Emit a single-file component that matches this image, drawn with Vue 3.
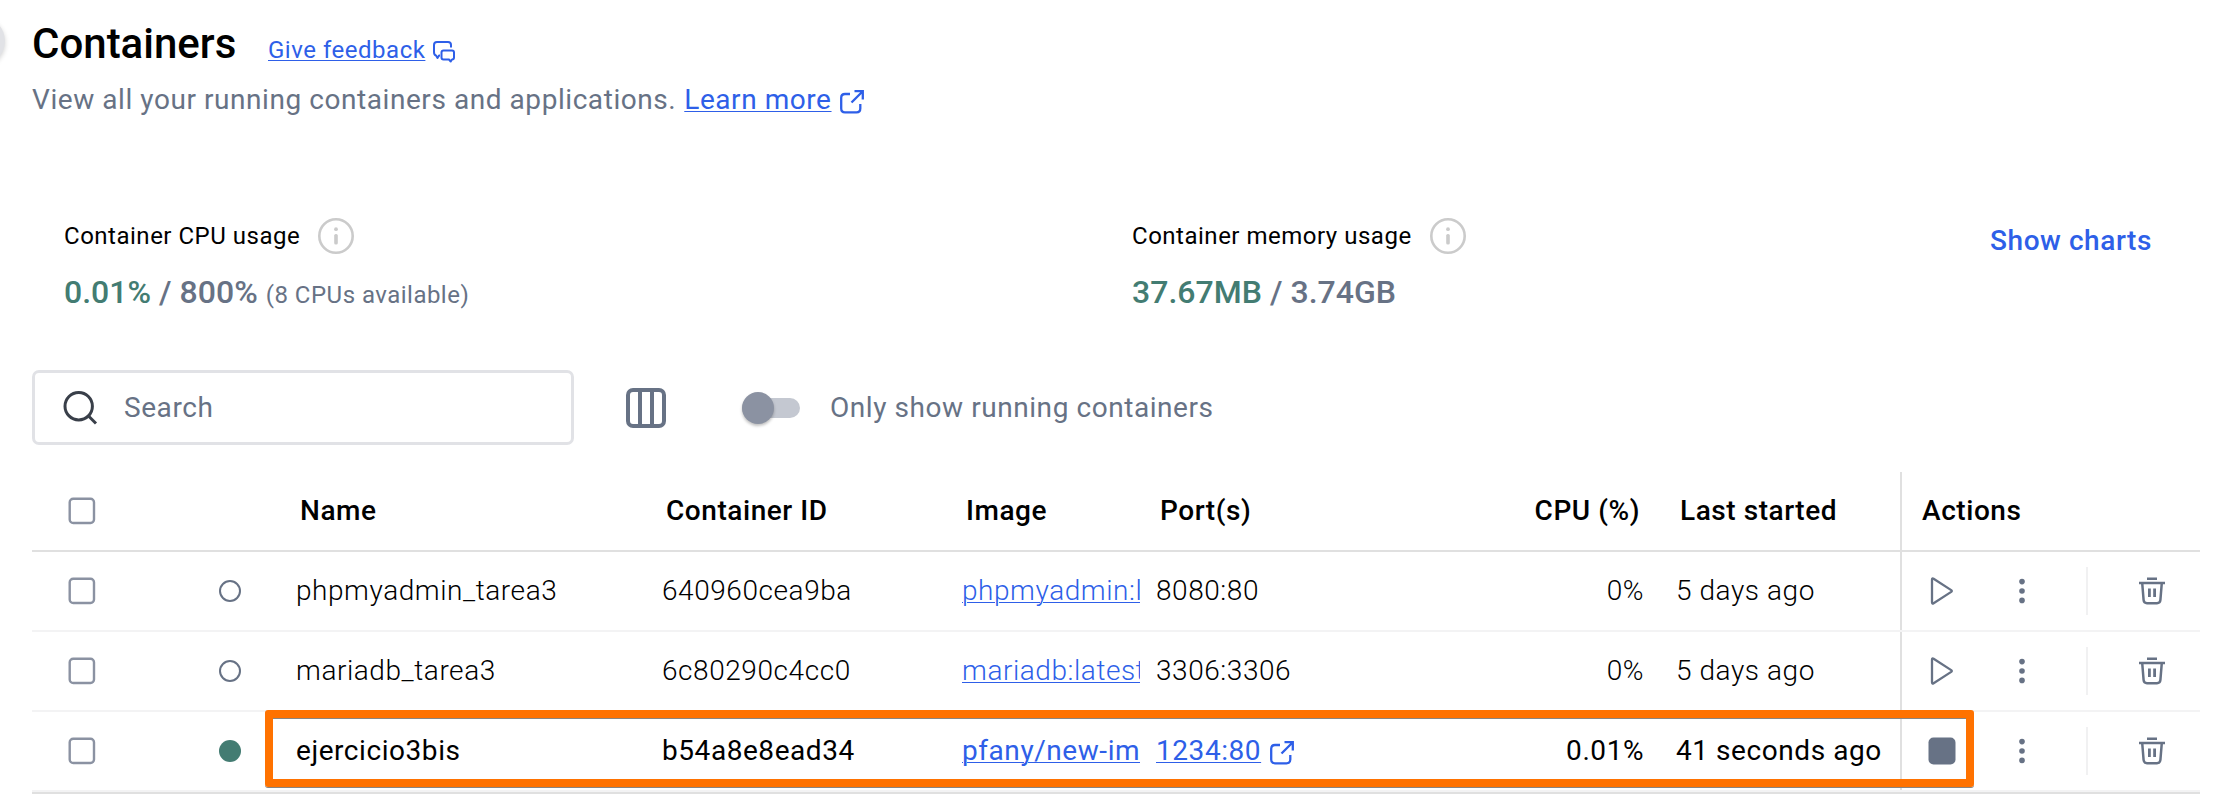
<script setup>
const rows = [
  { name: 'phpmyadmin_tarea3', id: '640960cea9ba', image: 'phpmyadmin:latest', port: '8080:80', cpu: '0%', started: '5 days ago', running: false },
  { name: 'mariadb_tarea3', id: '6c80290c4cc0', image: 'mariadb:latest', port: '3306:3306', cpu: '0%', started: '5 days ago', running: false },
  { name: 'ejercicio3bis', id: 'b54a8e8ead34', image: 'pfany/new-image', port: '1234:80', cpu: '0.01%', started: '41 seconds ago', running: true },
]
</script>

<template>
  <main class="page">
    <div class="drawer-handle"></div>

    <header class="heading">
      <div class="title-row">
        <h1>Containers</h1>
        <a class="feedback">Give feedback</a>
        <svg class="chat" width="24" height="24" viewBox="0 0 24 24" fill="none" stroke="currentColor" stroke-width="2" stroke-linejoin="round">
          <path d="M8 15.500H7L5.500 18L4 15.500Q2 15 2 12V5Q2 2 5 2H16Q19 2 19 5V7.500" />
          <path d="M11.500 10.500H20Q22 10.500 22 12.500V17.500Q22 19.500 20 19.500L18.700 21.500L17 19.500H11.500Q9.500 19.500 9.500 17.500V12.500Q9.500 10.500 11.500 10.500Z" />
        </svg>
      </div>
      <div class="subtitle">
        <span>View all your running containers and applications.</span>
        <a class="learn">Learn more</a>
        <svg class="ext" width="26" height="26" viewBox="0 0 26 26" fill="none" stroke="currentColor" stroke-width="2.300">
          <path d="M11 5H6Q2.200 5 2.200 8.800V19.500Q2.200 23.300 6 23.300H17.500Q21.300 23.300 21.300 19.500V15M12.500 13.500L23.500 2.500M15.500 2.200H23.800V10.500" />
        </svg>
      </div>
    </header>

    <section class="usage">
      <div class="metric">
        <div class="label">
          <span>Container CPU usage</span>
          <svg width="36" height="36" viewBox="0 0 36 36"><circle cx="18" cy="18" r="16.700" fill="none" stroke="#cbcbcb" stroke-width="2.600" /><circle cx="18" cy="11.200" r="1.900" fill="#cbcbcb" /><rect x="16.200" y="16" width="3.600" height="10.500" rx="1.600" fill="#cbcbcb" /></svg>
        </div>
        <div class="value"><b>0.01%</b> / 800% <small>(8 CPUs available)</small></div>
      </div>
      <div class="metric">
        <div class="label">
          <span>Container memory usage</span>
          <svg width="36" height="36" viewBox="0 0 36 36"><circle cx="18" cy="18" r="16.700" fill="none" stroke="#cbcbcb" stroke-width="2.600" /><circle cx="18" cy="11.200" r="1.900" fill="#cbcbcb" /><rect x="16.200" y="16" width="3.600" height="10.500" rx="1.600" fill="#cbcbcb" /></svg>
        </div>
        <div class="value"><b>37.67MB</b> / 3.74GB</div>
      </div>
      <a class="charts">Show charts</a>
    </section>

    <section class="toolbar">
      <div class="search">
        <svg width="36" height="36" viewBox="0 0 36 36" fill="none" stroke="#393f49" stroke-width="3"><circle cx="16.700" cy="16.200" r="13.700" /><path d="M26 25.500L34 33.500" /></svg>
        <span>Search</span>
      </div>
      <svg class="columns" width="40" height="40" viewBox="0 0 40 40" fill="none" stroke="#677285" stroke-width="4"><rect x="2" y="2" width="36" height="36" rx="5" /><path d="M14 2V38M26 2V38" /></svg>
      <div class="switch"><i></i></div>
      <span class="only">Only show running containers</span>
    </section>

    <section class="table">
      <div class="row head">
        <svg class="check" width="28" height="28" viewBox="0 0 28 28"><rect x="1.700" y="1.700" width="24.300" height="24.300" rx="3.500" fill="none" stroke="#8b92a2" stroke-width="2.400" /></svg>
        <span></span>
        <span class="text">Name</span>
        <span class="text">Container ID</span>
        <span class="text">Image</span>
        <span class="text">Port(s)</span>
        <span class="text num">CPU (%)</span>
        <span class="text started">Last started</span>
        <div class="actions"><span class="text">Actions</span></div>
      </div>
      <div v-for="row in rows" :key="row.id" class="row" :class="{ running: row.running }">
        <svg class="check" width="28" height="28" viewBox="0 0 28 28"><rect x="1.700" y="1.700" width="24.300" height="24.300" rx="3.500" fill="none" stroke="#8b92a2" stroke-width="2.400" /></svg>
        <span class="status"><i></i></span>
        <span class="text">{{ row.name }}</span>
        <span class="text">{{ row.id }}</span>
        <span class="text image"><a>{{ row.image }}</a></span>
        <span v-if="row.running" class="text port">
          <a>{{ row.port }}</a>
          <svg class="ext" width="26" height="26" viewBox="0 0 26 26" fill="none" stroke="currentColor" stroke-width="2.300">
            <path d="M11 5H6Q2.200 5 2.200 8.800V19.500Q2.200 23.300 6 23.300H17.500Q21.300 23.300 21.300 19.500V15M12.500 13.500L23.500 2.500M15.500 2.200H23.800V10.500" />
          </svg>
        </span>
        <span v-else class="text">{{ row.port }}</span>
        <span class="text num">{{ row.cpu }}</span>
        <span class="text started">{{ row.started }}</span>
        <div class="actions">
          <svg class="play" width="28" height="30" viewBox="0 0 28 30">
            <rect v-if="row.running" x="0.500" y="1.500" width="27" height="27" rx="5" fill="#677285" />
            <path v-else d="M4 3.700V26.300Q4 28.200 5.600 27.200L23.200 15.900Q24.400 15 23.200 14.100L5.600 2.800Q4 1.800 4 3.700Z" fill="none" stroke="#677285" stroke-width="2.300" />
          </svg>
          <svg class="dots" width="6" height="26" viewBox="0 0 6 26" fill="#677285"><circle cx="3" cy="3.600" r="2.800" /><circle cx="3" cy="13" r="2.800" /><circle cx="3" cy="22.400" r="2.800" /></svg>
          <span class="divider"></span>
          <svg class="trash" width="28" height="30" viewBox="0 0 28 30" fill="none" stroke="#677285" stroke-width="2.500">
            <path d="M9 2.700H19M1 7H27M4.200 7L5.600 24Q5.900 27.200 9 27.200H19Q22.100 27.200 22.400 24L23.800 7" /><path d="M11.400 12.500V21M16.600 12.500V21" stroke-width="2.800" />
          </svg>
        </div>
      </div>
      <div class="highlight"></div>
    </section>
  </main>
</template>

<style>
body { margin: 0; background: #fff; }
</style>

<style scoped>
.page { position: relative; box-sizing: border-box; width: 2220px; height: 798px; padding: 0 20px 0 32px; overflow: hidden; background: #fff; color: #000; font-family: Roboto, "Liberation Sans", sans-serif; font-size: 28px; letter-spacing: 0.56px; white-space: nowrap; }
.drawer-handle { position: absolute; left: -43px; top: 17px; width: 48px; height: 48px; border-radius: 50%; background: #e1e2e6; box-shadow: 0 2px 5px rgba(0, 0, 0, 0.18); }
a { color: #2e5fe8; text-decoration: underline; text-decoration-thickness: 1px; text-underline-offset: 2px; }
.heading { height: 200px; }
.title-row { display: flex; height: 76px; padding-top: 20px; box-sizing: border-box; }
h1 { margin: 0; width: 236px; font-size: 42px; line-height: 48px; font-weight: 500; letter-spacing: 0; }
.feedback { margin-top: 14px; line-height: 32px; font-size: 24px; letter-spacing: 0.52px; }
.chat { margin-left: 7px; margin-top: 20px; color: #2e5fe8; }
.subtitle { display: flex; height: 48px; line-height: 48px; color: #677285; }
.subtitle a { margin-left: 8px; }
.subtitle .ext { margin: 13px 0 0 7px; }
.ext { color: #2e5fe8; flex: none; }
.usage { display: flex; height: 170px; padding-left: 32px; }
.metric { flex: none; width: 1068px; }
.metric + .metric { width: 858px; }
.label { display: flex; align-items: center; height: 36px; margin-top: 18px; font-size: 24px; letter-spacing: 0.51px; gap: 18px; }
.value { margin-top: 18px; line-height: 40px; font-size: 32px; font-weight: 500; color: #677285; letter-spacing: 0.02px; }
.value b { font-weight: 500; color: #437c72; }
.value small { font-size: 24px; font-weight: 400; letter-spacing: 0.48px; }
.charts { margin-top: 25px; height: 32px; line-height: 32px; text-decoration: none; font-weight: 500; }
.toolbar { display: flex; align-items: center; height: 75px; margin-bottom: 27px; color: #677285; }
.search { display: flex; align-items: center; box-sizing: border-box; width: 542px; height: 75px; padding-left: 27px; border: 3px solid #e1e2e6; border-radius: 7px; gap: 26px; }
.columns { margin-left: 52px; }
.switch { position: relative; width: 58px; height: 20px; margin-left: 76px; border-radius: 10px; background: #c4c8d1; }
.switch i { position: absolute; left: 0; top: -6px; width: 32px; height: 32px; border-radius: 50%; background: #8b92a2; box-shadow: 0 2px 3px rgba(0, 0, 0, 0.25); }
.only { margin-left: 30px; }
.table { position: relative; height: 322px; box-sizing: border-box; border-bottom: 2px solid #e0e0e0; }
.row { display: grid; grid-template-columns: 187px 77px 366px 300px 194px 300px 188px 256px 300px; align-items: center; box-sizing: border-box; height: 80px; border-bottom: 2px solid #f3f3f4; font-weight: 300; }
.text { line-height: 34px; }
.head { border-color: #e0e0e0; font-weight: 500; }
.head .text { padding-left: 4px; }
.running { font-weight: 400; }
.check { display: block; margin-left: 36px; }
.status i { display: block; box-sizing: border-box; width: 22px; height: 22px; border: 2px solid #677285; border-radius: 50%; }
.running .status i { border: 0; background: #437c72; }
.image { width: 178px; overflow: hidden; }
.port { display: flex; align-items: center; }
.port .ext { margin: 4px 0 0 8px; }
.num { text-align: right; }
.head .num { padding-right: 4px; }
.started { padding-left: 32px; }
.head .started { padding-left: 36px; }
.actions { display: flex; align-items: center; box-sizing: border-box; height: 78px; border-left: 2px solid #e0e0e0; }
.head .actions .text { padding-left: 20px; }
.play { margin-left: 26px; }
.dots { margin-left: 63px; }
.divider { width: 2px; height: 48px; margin-left: 61px; background: #f1f1f2; }
.trash { margin-left: 50px; }
.highlight { position: absolute; left: 233px; top: 238px; width: 1693px; height: 61px; border: 8px solid #ff7200; border-radius: 3px; box-shadow: 0 1px 0 #8a8580, inset 0 1px 0 #8a8580; }
</style>
